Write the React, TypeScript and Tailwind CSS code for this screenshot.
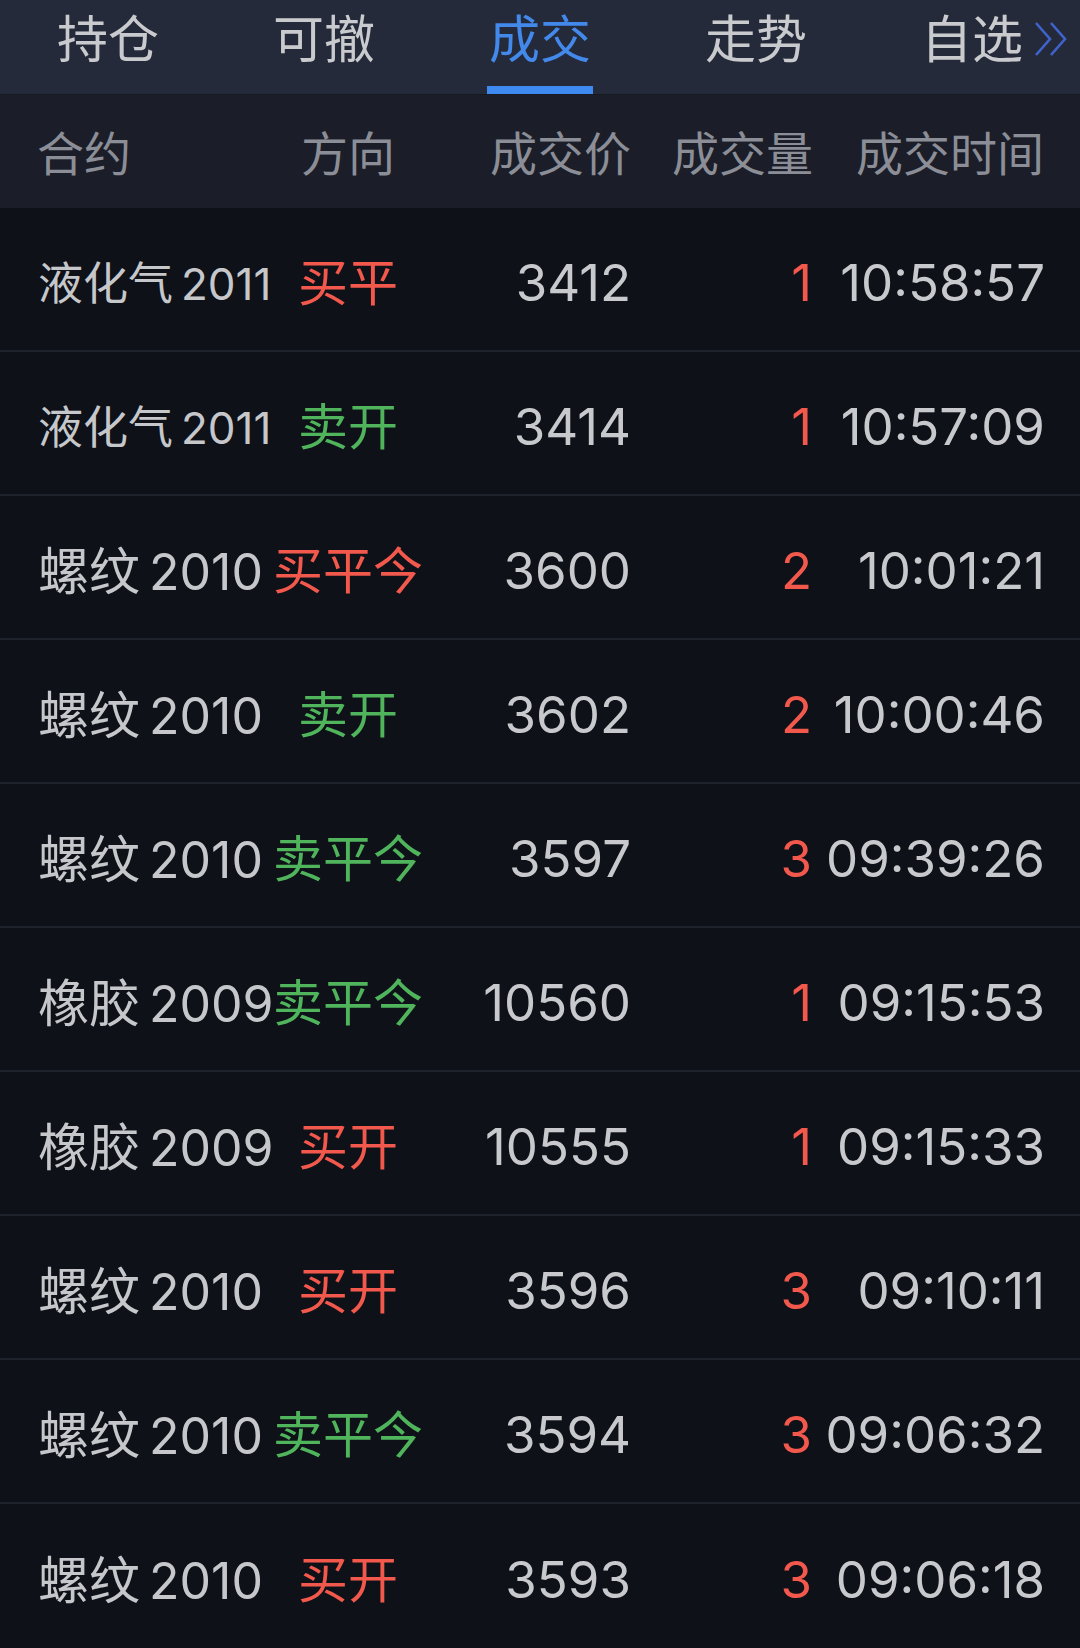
import React from 'react'

type Trade = {
    name: string
    code: string
    side: string
    price: string
    qty: string
    time: string
}

const trades: Trade[] = [
    { name: '液化气', code: '2011', side: '买平', price: '3412', qty: '1', time: '10:58:57' },
    { name: '液化气', code: '2011', side: '卖开', price: '3414', qty: '1', time: '10:57:09' },
    { name: '螺纹', code: '2010', side: '买平今', price: '3600', qty: '2', time: '10:01:21' },
    { name: '螺纹', code: '2010', side: '卖开', price: '3602', qty: '2', time: '10:00:46' },
    { name: '螺纹', code: '2010', side: '卖平今', price: '3597', qty: '3', time: '09:39:26' },
    { name: '橡胶', code: '2009', side: '卖平今', price: '10560', qty: '1', time: '09:15:53' },
    { name: '橡胶', code: '2009', side: '买开', price: '10555', qty: '1', time: '09:15:33' },
    { name: '螺纹', code: '2010', side: '买开', price: '3596', qty: '3', time: '09:10:11' },
    { name: '螺纹', code: '2010', side: '卖平今', price: '3594', qty: '3', time: '09:06:32' },
    { name: '螺纹', code: '2010', side: '买开', price: '3593', qty: '3', time: '09:06:18' },
]

const tabs = ['持仓', '可撤', '成交', '走势', '自选']

const cjk = "font-['Noto_Sans_CJK_SC',_'Noto_Sans',_sans-serif]"
const num = "font-['Inter',_'Noto_Sans_CJK_SC',_sans-serif]"

function TabBar() {
    return (
        <div className="relative flex h-[95px] bg-[#252a3a] border-b border-[#161922]">
            {tabs.map((t, i) => (
                <div key={t} className="flex-1 flex flex-col items-center justify-between">
                    <span
                        className={`${cjk} pt-[10px] text-[51px] leading-[52px] ${
                            i === 2 ? 'text-[#4389ec]' : 'text-[#c9cace]'
                        }`}
                    >
                        {t}
                    </span>
                    <div className={`h-[8px] w-[106px] ${i === 2 ? 'bg-[#3f8af0]' : ''}`} />
                </div>
            ))}
            {/* more tabs arrow */}
            <svg
                className="absolute right-[12px] top-[21px]"
                width="34"
                height="36"
                viewBox="0 0 34 36"
                fill="none"
                stroke="#3e64cc"
                strokeWidth="2.6"
            >
                <path d="M2 2 L16 18 L2 34 M17 2 L31 18 L17 34" />
            </svg>
        </div>
    )
}

function HeaderRow() {
    return (
        <div className={`${cjk} flex items-center h-[113px] bg-[#1b1e29] text-[47px] text-[#8b8e96] whitespace-nowrap`}>
            <div className="w-[272px] pl-[37px]">合约</div>
            <div className="w-[152px] text-center">方向</div>
            <div className="w-[207px] text-right">成交价</div>
            <div className="w-[182px] text-right">成交量</div>
            <div className="w-[231px] text-right">成交时间</div>
        </div>
    )
}

function TradeRow({ trade, last }: { trade: Trade; last: boolean }) {
    const buy = trade.side.startsWith('买')
    // long names are shrunk to fit the column
    const long = trade.name.length > 2
    return (
        <div
            className={`flex items-center h-[144px] whitespace-nowrap ${
                last ? '' : 'border-b-2 border-[#1e222b]'
            }`}
        >
            <div className="w-[272px] pl-[38px] pt-[6px] text-[#c6c7cb]">
                <span className={`${cjk} ${long ? 'text-[45px]' : 'text-[51px]'}`}>{trade.name}</span>
                <span className={`${num} ${long ? 'text-[44px] ml-[8px]' : 'text-[50px] ml-[9px]'}`}>
                    {trade.code}
                </span>
            </div>
            <div
                className={`${cjk} w-[152px] text-center text-[50px] ${
                    buy ? 'text-[#f2594c]' : 'text-[#4fb45b]'
                }`}
            >
                {trade.side}
            </div>
            <div className={`${num} w-[207px] pt-[8px] text-right text-[51px] text-[#c8c9cd]`}>{trade.price}</div>
            <div className={`${num} w-[181px] pt-[8px] text-right text-[51px] text-[#f2594c]`}>{trade.qty}</div>
            <div className={`${num} w-[233px] pt-[8px] text-right text-[51px] text-[#c8c9cd]`}>{trade.time}</div>
        </div>
    )
}

export default function App() {
    return (
        <div className="w-[1080px] h-[1648px] overflow-hidden bg-[#0e1118]">
            <TabBar />
            <HeaderRow />
            {trades.map((t, i) => (
                <TradeRow key={i} trade={t} last={i === trades.length - 1} />
            ))}
        </div>
    )
}
